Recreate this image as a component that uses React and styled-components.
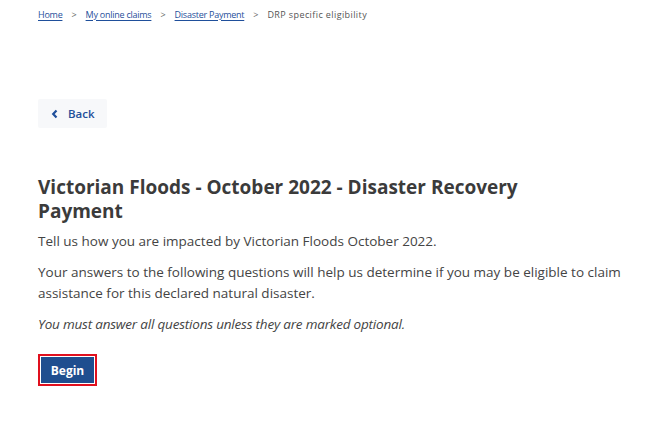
import styled, { createGlobalStyle } from "styled-components";

const Global = createGlobalStyle`
  body {
    margin: 0;
    background: #fff;
    font-family: "Open Sans", "Noto Sans", sans-serif;
    color: #404040;
  }
`;

const Page = styled.main`
  width: 650px;
  height: 435px;
  padding: 0 8px 0 38px;
  box-sizing: border-box;
  overflow: hidden;
`;

const Crumbs = styled.nav`
  display: flex;
  align-items: center;
  gap: 9px;
  padding-top: 7px;
  height: 14px;
  font-size: 9px;
`;

const CrumbLink = styled.a`
  color: #1f4f9b;
  text-decoration: underline;
  text-underline-offset: 2px;
  letter-spacing: -0.25px;
`;

const Sep = styled.span`
  color: #666;
`;

const Current = styled.span`
  color: #555;
  letter-spacing: 0.4px;
`;

const BackButton = styled.button`
  display: flex;
  align-items: center;
  gap: 9px;
  margin-top: 78px;
  height: 29px;
  padding: 0 12px 0 13px;
  border: 0;
  border-radius: 2px;
  background: #f7f8fa;
  color: #1f4f9b;
  font-family: inherit;
  font-size: 11.5px;
  font-weight: 600;
`;

const Heading = styled.h1`
  margin: 47px 0 0;
  font-size: 19px;
  line-height: 24px;
  font-weight: 700;
  color: #3b3b3b;
  max-width: 520px;
`;

const Text = styled.p`
  margin: ${(p) => p.$top || 10}px 0 0;
  font-size: 13.5px;
  line-height: 21px;
  color: #444;
  font-style: ${(p) => (p.$italic ? "italic" : "normal")};
  letter-spacing: ${(p) => (p.$italic ? "-0.2px" : "0")};
`;

const Begin = styled.button`
  margin-top: 19px;
  height: 32px;
  width: 59px;
  border: 2px solid #e0101e;
  background: #1f4e8f;
  box-shadow: inset 0 0 0 1px #fff;
  color: #fff;
  font-family: inherit;
  font-size: 12px;
  font-weight: 700;
  padding: 0;
`;

export default function App() {
  return (
    <Page>
      <Global />
      <Crumbs>
        <CrumbLink>Home</CrumbLink>
        <Sep>&gt;</Sep>
        <CrumbLink>My online claims</CrumbLink>
        <Sep>&gt;</Sep>
        <CrumbLink>Disaster Payment</CrumbLink>
        <Sep>&gt;</Sep>
        <Current>DRP specific eligibility</Current>
      </Crumbs>
      <BackButton>
        <svg width="8" height="10" viewBox="0 0 8 10">
          <path d="M5.5 1.5 L2.2 5 L5.5 8.5" fill="none" stroke="#1f4f9b" strokeWidth="2.2" />
        </svg>
        Back
      </BackButton>
      <Heading>Victorian Floods - October 2022 - Disaster Recovery Payment</Heading>
      <Text $top={8}>Tell us how you are impacted by Victorian Floods October 2022.</Text>
      <Text>
        Your answers to the following questions will help us determine if you may be eligible to claim
        assistance for this declared natural disaster.
      </Text>
      <Text $italic>You must answer all questions unless they are marked optional.</Text>
      <Begin>Begin</Begin>
    </Page>
  );
}
